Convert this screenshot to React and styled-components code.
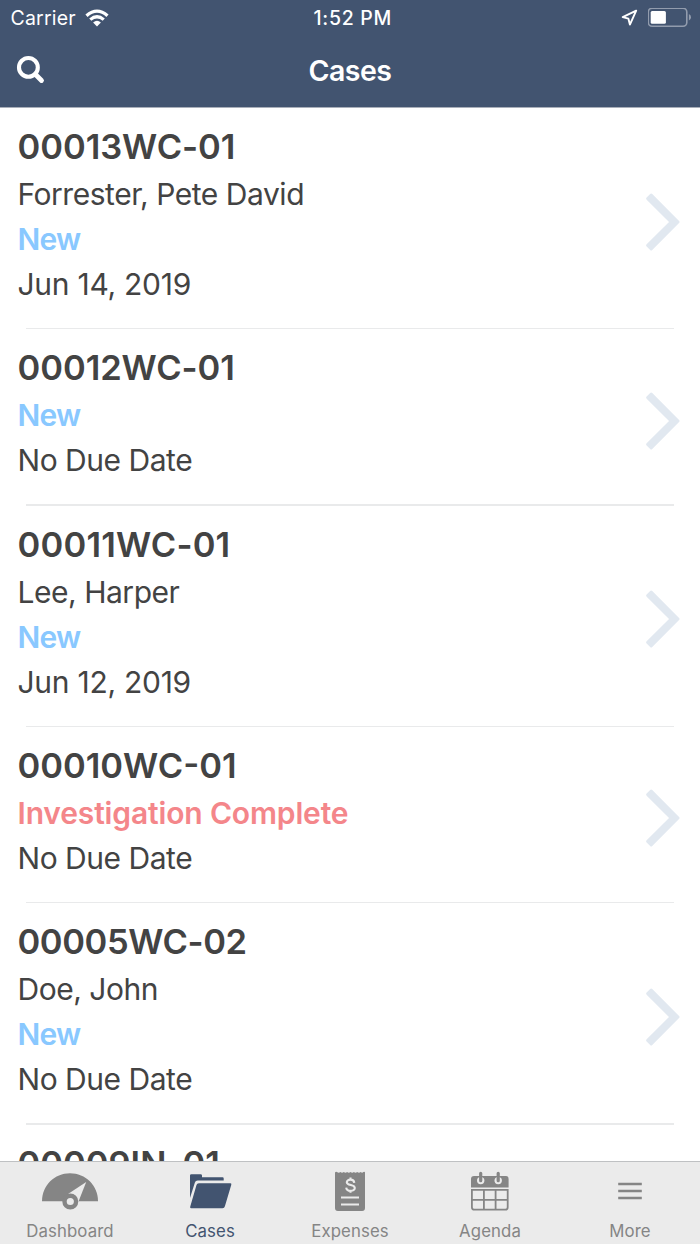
import React from "react";
import styled, { createGlobalStyle } from "styled-components";

const GlobalStyle = createGlobalStyle`
  * {
    box-sizing: border-box;
  }
  body {
    margin: 0;
    background: #fff;
    font-family: Inter, "Liberation Sans", sans-serif;
    overflow: hidden;
  }
  svg {
    display: block;
  }
`;

const Screen = styled.div`
  display: flex;
  flex-direction: column;
  width: 700px;
  height: 1244px;
  overflow: hidden;
  color: #434343;
`;
const Header = styled.header`
  flex: none;
  height: 108px;
  background: #425470;
  border-bottom: 1px solid #a9afba;
  color: #fff;
`;
const StatusBar = styled.div`
  display: grid;
  grid-template-columns: 1fr auto 1fr;
  align-items: center;
  height: 36px;
  padding: 0 8px 0 10.5px;
  font-size: 19.5px;
  line-height: 36px;
`;
const Carrier = styled.div`
  display: flex;
  align-items: center;
  gap: 9px;
  letter-spacing: 0.2px;
`;
const Clock = styled.div`
  font-weight: 500;
  letter-spacing: 0.7px;
  padding-left: 3px;
`;
const Indicators = styled.div`
  display: flex;
  align-items: center;
  justify-content: flex-end;
  gap: 10px;
`;
const NavBar = styled.div`
  display: grid;
  grid-template-columns: 1fr auto 1fr;
  align-items: center;
  height: 70px;
  padding: 0 16px;
`;
const Heading = styled.h1`
  margin: 0;
  font-size: 28.5px;
  font-weight: 600;
  line-height: 70px;
  letter-spacing: -0.5px;
`;
const List = styled.main`
  flex: 1;
  min-height: 0;
  overflow: hidden;
`;
const Row = styled.div`
  display: flex;
  align-items: center;
  justify-content: space-between;
  padding: 13px 20px 22.35px 17.5px;
`;
const Divider = styled.div`
  height: 1.5px;
  margin: -1.5px 26px 0;
  background: #e9eaeb;
`;
const Title = styled.h2`
  margin: 0;
  font-size: 34.5px;
  font-weight: 600;
  line-height: 51px;
  letter-spacing: ${(props) => props.$tracking}px;
  white-space: nowrap;
`;
const Line = styled.p`
  margin: 0;
  font-size: 30px;
  line-height: 45px;
  letter-spacing: ${(props) => (props.$tight ? -0.47 : -0.27)}px;
  white-space: nowrap;
`;
const Status = styled(Line)`
  font-weight: 600;
  letter-spacing: ${(props) => (props.$done ? -0.15 : -0.8)}px;
  color: ${(props) => (props.$done ? "#f4868a" : "#89c8ff")};
`;
const Arrow = styled.svg`
  flex: none;
  margin-top: 15.5px;
`;
const TabBar = styled.nav`
  flex: none;
  display: grid;
  grid-template-columns: repeat(5, 1fr);
  height: 83px;
  background: #ebebeb;
  border-top: 1.5px solid #bfc1c3;
`;
const Tab = styled.div`
  display: flex;
  flex-direction: column;
  align-items: center;
  color: ${(props) => (props.$active ? "#425470" : "#858585")};
  font-size: 16.8px;
  line-height: 22px;
  letter-spacing: 0.1px;
`;
const TabIcon = styled.div`
  height: 58px;
`;

const WifiIcon = () => (
  <svg width="24" height="18" viewBox="0 0 24 18">
    <path d="M.4 5.5Q12-4.6 23.6 5.5L21.4 7.9Q12-.2 2.6 7.9Z" fill="#fff" />
    <path d="M4.2 9.5Q12 2.7 19.8 9.5L17.7 11.8Q12 7 6.3 11.8Z" fill="#fff" />
    <path d="M8.1 13.4Q12 10 15.9 13.4L12 17.4Z" fill="#fff" />
  </svg>
);

const LocationIcon = () => (
  <svg width="17" height="18" viewBox="0 0 17 18">
    <path
      d="M15.2 1.6L1.7 8.2L7.4 9.7L8.9 15.6Z"
      fill="none"
      stroke="#fff"
      strokeWidth="1.9"
      strokeLinejoin="round"
    />
  </svg>
);

const BatteryIcon = () => (
  <svg width="44" height="20" viewBox="0 0 44 20">
    <rect x="0.3" y="0.3" width="38.5" height="18" rx="3.8" fill="none" stroke="#929cad" strokeWidth="1.6" />
    <rect x="2.7" y="2.9" width="15.2" height="12.8" rx="1.5" fill="#fff" />
    <path d="M40.9 6Q43 6.8 43 9.3T40.9 12.6Z" fill="#929cad" />
  </svg>
);

const SearchIcon = () => (
  <svg width="30" height="32" viewBox="0 0 30 32">
    <circle cx="12.4" cy="12.4" r="9.4" fill="none" stroke="#fff" strokeWidth="4.1" />
    <path d="M19.3 19.3L25.5 25.5" stroke="#fff" strokeWidth="4.8" strokeLinecap="round" />
  </svg>
);

const DashboardIcon = () => (
  <svg width="60" height="58" viewBox="0 0 60 58">
    <path d="M2 39.3C2 23.5 14.5 11.3 30 11.3S58 23.5 58 39.3Z" fill="currentColor" />
    <path d="M46.2 20L28.4 31.8L37.9 41Z" fill="#ebebeb" />
    <circle cx="30.3" cy="39.5" r="5.8" fill="#ebebeb" stroke="currentColor" strokeWidth="4.4" />
  </svg>
);

const FolderIcon = () => (
  <svg width="44" height="58" viewBox="0 0 44 58">
    <path
      d="M2 13.6Q2 12.2 3.4 12.2H12.6Q14 12.2 14 13.6V15.3H34.6Q35.7 15.3 35.7 16.4V18.4H9.7Q7.5 18.4 6.9 20.4L2 36Z"
      fill="currentColor"
    />
    <path
      d="M10.8 21.3H42.2Q43.7 21.3 43.3 22.7L36.9 44.3Q36.4 46.2 34.5 46.2H3.3Q1.8 46.2 2.2 44.7L8.5 23.1Q9 21.3 10.8 21.3Z"
      fill="currentColor"
    />
  </svg>
);

const ReceiptIcon = () => (
  <svg width="32" height="58" viewBox="0 0 32 58">
    <path
      d="M1 10.5Q2 9.3 3 10.1Q4.7 11.6 6.4 10.1Q8 11.6 9.8 10.1Q11.5 11.6 13.1 10.1Q14.8 11.6 16.5 10.1Q18.2 11.6 19.9 10.1Q21.5 11.6 23.2 10.1Q25 11.6 26.7 10.1Q28.2 11.4 29.3 10.1Q30.8 9.3 31 10.5V46Q31 48.9 28.1 48.9H3.9Q1 48.9 1 46Z"
      fill="currentColor"
    />
    <path
      d="M20.3 20.8C19.8 16.6 12.8 16.8 12.8 20.2C12.8 24 20.8 22.2 20.8 26C20.8 30 12.6 29.8 12.2 25.6M16.5 15.6V18M16.5 28.6V30.8"
      fill="none"
      stroke="#ebebeb"
      strokeWidth="2.1"
    />
    <path d="M7 35.6H25M7 42.6H25" stroke="#ebebeb" strokeWidth="2" />
  </svg>
);

const CalendarIcon = () => (
  <svg width="40" height="58" viewBox="0 0 40 58">
    <path d="M1 25.4V17Q1 14 4 14H36Q38.6 14 38.6 17V25.4Z" fill="currentColor" />
    <circle cx="10.7" cy="18.6" r="3.7" fill="#ebebeb" />
    <circle cx="28.2" cy="18.6" r="3.7" fill="#ebebeb" />
    <path d="M10.7 11.3V18.7M28.2 11.3V18.7" stroke="currentColor" strokeWidth="3.2" strokeLinecap="round" />
    <path
      d="M1.9 27.9H37.7V45.2Q37.7 47.7 35.2 47.7H4.4Q1.9 47.7 1.9 45.2ZM13.9 27.9V47.7M25.6 27.9V47.7M1.9 37.8H37.7"
      fill="none"
      stroke="currentColor"
      strokeWidth="1.8"
    />
  </svg>
);

const MenuIcon = () => (
  <svg width="26" height="58" viewBox="0 0 26 58">
    <path d="M1.2 21.9H24.8M1.2 28.9H24.8M1.2 35.9H24.8" stroke="currentColor" strokeWidth="2.5" />
  </svg>
);

const cases = [
  { id: "00013WC-01", tracking: -0.05, name: "Forrester, Pete David", status: "New", due: "Jun 14, 2019" },
  { id: "00012WC-01", tracking: -0.05, status: "New", due: "No Due Date" },
  { id: "00011WC-01", tracking: 0.2, name: "Lee, Harper", status: "New", due: "Jun 12, 2019" },
  { id: "00010WC-01", tracking: 0, status: "Investigation Complete", done: true, due: "No Due Date" },
  { id: "00005WC-02", tracking: -0.4, name: "Doe, John", status: "New", due: "No Due Date" },
  { id: "00009IN-01", tracking: 0, status: "New", due: "No Due Date" },
];

const tabs = [
  { label: "Dashboard", icon: <DashboardIcon /> },
  { label: "Cases", icon: <FolderIcon />, active: true },
  { label: "Expenses", icon: <ReceiptIcon /> },
  { label: "Agenda", icon: <CalendarIcon /> },
  { label: "More", icon: <MenuIcon /> },
];

function CaseRow({ item }) {
  return (
    <>
      <Row>
        <div>
          <Title $tracking={item.tracking}>{item.id}</Title>
          {item.name && <Line $tight>{item.name}</Line>}
          <Status $done={item.done}>{item.status}</Status>
          <Line $tight={item.due === "No Due Date"}>{item.due}</Line>
        </div>
        <Arrow width="35" height="60" viewBox="0 0 35 60">
          <path
            d="M6.2 3.1L33 30L6.2 56.9L2.7 53.4L26.1 30L2.7 6.6Z"
            fill="#e1e8f0"
            stroke="#e1e8f0"
            strokeWidth="3"
            strokeLinejoin="round"
          />
        </Arrow>
      </Row>
      <Divider />
    </>
  );
}

function App() {
  return (
    <>
      <GlobalStyle />
      <Screen>
        <Header>
          <StatusBar>
            <Carrier>
              Carrier
              <WifiIcon />
            </Carrier>
            <Clock>1:52 PM</Clock>
            <Indicators>
              <LocationIcon />
              <BatteryIcon />
            </Indicators>
          </StatusBar>
          <NavBar>
            <SearchIcon />
            <Heading>Cases</Heading>
          </NavBar>
        </Header>
        <List>
          {cases.map((item) => (
            <CaseRow key={item.id} item={item} />
          ))}
        </List>
        <TabBar>
          {tabs.map((tab) => (
            <Tab key={tab.label} $active={tab.active}>
              <TabIcon>{tab.icon}</TabIcon>
              {tab.label}
            </Tab>
          ))}
        </TabBar>
      </Screen>
    </>
  );
}

export default App;
